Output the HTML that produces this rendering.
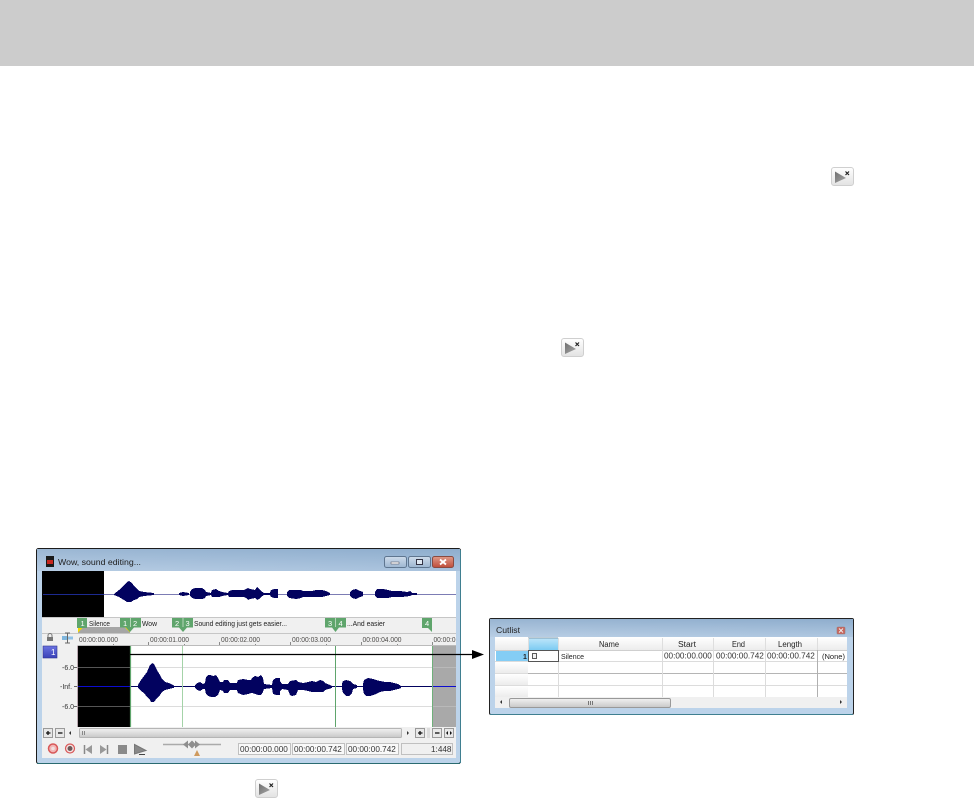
<!DOCTYPE html>
<html><head><meta charset="utf-8"><style>
html,body{margin:0;padding:0;background:#fff;width:974px;height:799px;overflow:hidden}
svg{display:block;position:absolute;left:0;top:0}
text{font-family:"Liberation Sans",sans-serif;font-size:7.5px;fill:#222}
.r{fill:#4c4a48;font-size:7.5px}
.v{fill:#333;font-size:8.2px}
.m{fill:#fff;font-size:7.5px}
</style></head><body>
<svg width="974" height="799" viewBox="0 0 974 799">
<defs>
<linearGradient id="title" x1="0" y1="0" x2="0" y2="1"><stop offset="0" stop-color="#8eaccb"/><stop offset="1" stop-color="#c3d6ea"/></linearGradient>
<linearGradient id="titleh" x1="0" y1="0" x2="1" y2="0"><stop offset="0" stop-color="#a9c2dc"/><stop offset="1" stop-color="#8fafd0"/></linearGradient>
<linearGradient id="btn" x1="0" y1="0" x2="0" y2="1"><stop offset="0" stop-color="#fff"/><stop offset="1" stop-color="#e2e2e2"/></linearGradient>
<linearGradient id="tri" x1="0" y1="0" x2="1" y2="1"><stop offset="0" stop-color="#6e6e6e"/><stop offset="1" stop-color="#a8a8a8"/></linearGradient>
<linearGradient id="wb" x1="0" y1="0" x2="0" y2="1"><stop offset="0" stop-color="#cfdceb"/><stop offset="1" stop-color="#9db6d1"/></linearGradient>
<linearGradient id="wr" x1="0" y1="0" x2="0" y2="1"><stop offset="0" stop-color="#e09a88"/><stop offset="1" stop-color="#bf4d3a"/></linearGradient>
<linearGradient id="sb" x1="0" y1="0" x2="0" y2="1"><stop offset="0" stop-color="#f2f2f2"/><stop offset="1" stop-color="#c8c8c8"/></linearGradient>
<linearGradient id="sel" x1="0" y1="0" x2="0" y2="1"><stop offset="0" stop-color="#bfe6fa"/><stop offset="1" stop-color="#7ccbf2"/></linearGradient>
<linearGradient id="hd" x1="0" y1="0" x2="0" y2="1"><stop offset="0" stop-color="#fff"/><stop offset="1" stop-color="#ececec"/></linearGradient>
<linearGradient id="badge" x1="0" y1="0" x2="0" y2="1"><stop offset="0" stop-color="#6a72e0"/><stop offset="1" stop-color="#3a42b8"/></linearGradient>
<g id="pb">
<rect x=".5" y=".5" width="22" height="18" rx="2.5" fill="url(#btn)" stroke="#cfcfcf"/>
<path d="M4 4.500 L15 11 L4 16 Z" fill="url(#tri)"/>
<path d="M14.500 4.500 L18 8 M18 4.500 L14.500 8" stroke="#222" stroke-width="1.200"/>
</g>
</defs>
<rect x="0" y="0" width="974" height="66" fill="#cccccc"/>
<use href="#pb" x="831" y="167"/>
<use href="#pb" x="561" y="338"/>
<use href="#pb" x="255" y="779"/>

<!-- Main window -->
<rect x="36.500" y="548.500" width="424" height="215" rx="2" fill="#bcd3ea" stroke="#1c1c1c"/>
<path d="M37 763.500H460" stroke="#2a6b70"/>
<path d="M460.500 550V763" stroke="#3f7f90"/>
<rect x="37" y="549" width="423" height="22" fill="url(#title)"/>
<rect x="37" y="549" width="423" height="22" fill="url(#titleh)" opacity=".5"/>
<rect x="46" y="556" width="8" height="11" fill="#1a1a1a"/><rect x="47" y="560" width="6" height="4" fill="#c8261e"/>
<text x="58" y="565" textLength="83" lengthAdjust="spacingAndGlyphs" style="font-size:8.500px">Wow, sound editing...</text>
<rect x="384.500" y="556.500" width="22" height="11" rx="2" fill="url(#wb)" stroke="#5f7690"/>
<rect x="391" y="562" width="8" height="2" fill="#fff" stroke="#445" stroke-width=".5"/>
<rect x="408.500" y="556.500" width="22" height="11" rx="2" fill="url(#wb)" stroke="#5f7690"/>
<rect x="416.500" y="559.500" width="6" height="5" fill="#dfe8f2" stroke="#334"/>
<rect x="432.500" y="556.500" width="21" height="11" rx="2" fill="url(#wr)" stroke="#8a4a40"/>
<path d="M440 559.500L446 564.500M446 559.500L440 564.500" stroke="#fff" stroke-width="1.800"/>

<rect x="42" y="571" width="414" height="187" fill="#f0f0f0"/>
<!-- overview -->
<rect x="42" y="571" width="414" height="46" fill="#fff"/>
<rect x="42" y="571" width="62" height="46" fill="#000"/>
<path d="M43 594.500H104" stroke="#1c2a90"/>
<path d="M104 594.500H456" stroke="#7c7cb4"/>
<g fill="#02025f" shape-rendering="crispEdges">
<path d="M114 594L119 590L124 585L127 582L129 581L132 583L134 586L137 589L139 591L144 592L154 593V595L144 596L139 597L137 599L134 600L131 602L129 602L127 602L124 600L119 597L114 595Z"/>
<path d="M179 593L183 592L189 593V595L183 596L179 595Z"/>
<path d="M190 592L192 589L195 588L202 588L205 590L206 592L211 593L212 590L216 589L219 591L222 592L228 593L229 591L232 590L244 590L246 589L248 588L250 589L255 590L257 587L259 589L261 591L264 593L270 593L271 590L274 589L278 589V598L274 598L271 597L270 595L264 595L261 597L259 599L257 600L255 598L250 599L248 600L246 598L244 597L232 597L229 597L228 595L222 596L219 597L216 597L212 597L211 595L206 596L205 598L202 599L195 599L192 598L190 596Z"/>
<path d="M287 592L289 590L296 590L301 590L303 591L312 591L316 590L322 590L326 591L330 593V595L326 596L322 597L316 597L312 597L303 597L301 598L296 599L289 598L287 596Z"/>
<path d="M350 592L352 590L356 589L360 591L363 592V596L360 597L356 599L352 598L350 596Z"/>
<path d="M375 592L377 589L383 589L388 590L392 591L400 591L407 592L410 591L412 593L417 593V595L412 595L410 596L402 597L392 597L388 598L383 598L377 598L375 596Z"/>
</g>
<!-- marker bar -->
<rect x="42" y="617" width="414" height="16" fill="#f0f0f0"/>
<path d="M42 617.500H456M42 633.500H456" stroke="#c6c6c6"/>
<rect x="78" y="627" width="52" height="6" fill="#a6a6a6"/>
<path d="M78 627.500H83L78 632.500Z M130 627.500H125L130 632.500Z" fill="#f0d800"/>
<g fill="#5fa56c">
<rect x="77" y="618" width="10" height="10"/>
<path d="M120 618H141V627.500H134L130 632L126 627.500H120Z"/>
<path d="M172 618H193V627.500H187L183 632L179 627.500H172Z"/>
<path d="M325 618H346V627.500H339L335.500 632L332 627.500H325Z"/>
<path d="M422 618H432V632L428 628H422Z"/>
</g>
<path d="M130.500 618V627M183 618V627M335.500 618V627" stroke="#d9ead9" stroke-width=".7"/>
<text class="m" x="80.500" y="626">1</text>
<text class="m" x="123" y="626">1</text><text class="m" x="133" y="626">2</text>
<text class="m" x="175" y="626">2</text><text class="m" x="185.500" y="626">3</text>
<text class="m" x="328" y="626">3</text><text class="m" x="338.500" y="626">4</text>
<text class="m" x="425" y="626">4</text>
<text x="89" y="626" textLength="21" lengthAdjust="spacingAndGlyphs">Silence</text>
<text x="142" y="626" textLength="15" lengthAdjust="spacingAndGlyphs">Wow</text>
<text x="194" y="626" textLength="93" lengthAdjust="spacingAndGlyphs">Sound editing just gets easier...</text>
<text x="347" y="626" textLength="38" lengthAdjust="spacingAndGlyphs">...And easier</text>
<!-- ruler -->
<rect x="77" y="634" width="379" height="12" fill="#f0f0f0"/>
<path d="M77.500 645.500H456" stroke="#bbb"/>
<g stroke="#8a8a8a" fill="none">
<path d="M148.500 642V645M219.500 642V645M290.500 642V645M361.500 642V645M432.500 642V645"/>
<path d="M113.500 644V645M184.500 644V645M255.500 644V645M326.500 644V645M397.500 644V645"/>
</g>
<text class="r" x="79" y="642" textLength="39" lengthAdjust="spacingAndGlyphs">00:00:00.000</text>
<text class="r" x="150" y="642" textLength="39" lengthAdjust="spacingAndGlyphs">00:00:01.000</text>
<text class="r" x="221" y="642" textLength="39" lengthAdjust="spacingAndGlyphs">00:00:02.000</text>
<text class="r" x="292" y="642" textLength="39" lengthAdjust="spacingAndGlyphs">00:00:03.000</text>
<text class="r" x="362.500" y="642" textLength="39" lengthAdjust="spacingAndGlyphs">00:00:04.000</text>
<text class="r" x="433.500" y="642" textLength="22" lengthAdjust="spacingAndGlyphs">00:00:0</text>
<!-- lock & icon -->
<path d="M48 637V635.500a2 2 0 0 1 4 0V637" fill="none" stroke="#777" stroke-width="1"/>
<rect x="47" y="637" width="6" height="4" fill="#777"/>
<path d="M67.500 633V643M65 633H70M65 643H70" stroke="#666" fill="none"/>
<path d="M62 636H67V640H62Z" fill="#7fb6dd"/>
<path d="M68 636.500H73V639.500H68Z" fill="#8fc2e6"/>
<!-- track badge -->
<rect x="43" y="646" width="14" height="12" fill="url(#badge)" stroke="#2d3590" stroke-width=".6"/>
<text x="51" y="655" style="fill:#fff;font-size:8px">1</text>
<!-- main wave -->
<rect x="77" y="646" width="379" height="81" fill="#fff"/>
<rect x="77.500" y="646" width="53" height="81" fill="#000"/>
<rect x="432" y="646" width="24" height="81" fill="#a9a9a9"/>
<path d="M130 667.500H432M130 706.500H432" stroke="#dcdcdc"/>
<path d="M77 667.500H130M77 706.500H130" stroke="#555"/>
<path d="M432 667.500H456M432 706.500H456" stroke="#b9b9b9"/>
<path d="M78 686.500H130" stroke="#0c0cd0"/>
<path d="M432 686.500H456" stroke="#0c0cd0"/>
<path d="M130 686.500H432" stroke="#02025f"/>
<path d="M130.500 646V727" stroke="#5fa56c" stroke-width="1.200"/>
<path d="M182.500 646V727" stroke="#a4d3a8"/>
<path d="M335.500 646V727" stroke="#5fa56c"/>
<path d="M432.500 646V727" stroke="#6fb07a"/>
<path d="M77.500 646V727" stroke="#b9a8b0"/>
<g fill="#02025f" shape-rendering="crispEdges">
<path d="M138 685L141 680L144 676L147 672L150 665L152 663L154 664L157 670L160 675L162 679L165 682L169 683L173 685L174 686V688L173 688L169 689L165 690L162 692L160 695L157 698L154 702L151 702L150 700L147 697L144 693L141 691L138 688Z"/>
<path d="M195 685L197 683L200 682L203 684L205 683L206 677L208 675L210 675L213 676L216 675L218 678L220 682L223 682L224 680L228 680L230 683L237 683L238 680L243 679L248 680L251 680L252 678L255 676L258 677L261 675L263 678L264 684L272 685L273 680L276 678L280 678V695L276 695L273 694L272 688L264 689L263 692L261 695L258 695L255 694L252 693L251 693L248 694L243 695L238 693L237 690L230 690L228 693L224 693L223 691L220 690L218 695L215 697L211 697L208 696L206 694L205 689L203 689L200 691L197 690L195 688Z"/>
<path d="M280 681L282 684L288 684L290 681L296 680L298 682L303 683L308 682L312 681L316 682L320 680L323 681L325 683L330 685L332 686V688L325 690L323 692L316 692L312 692L308 691L303 690L298 690L296 695L292 696L290 695L288 690L282 689L280 691Z"/>
<path d="M342 684L343 681L346 680L350 681L353 684L357 685V688L353 689L352 693L349 696L346 696L343 693L342 689Z"/>
<path d="M363 684L364 680L368 678L373 679L376 680L380 681L385 682L390 682L394 683L398 684L401 686V688L398 689L394 690L390 691L385 691L380 692L376 694L370 696L366 696L364 694L363 689Z"/>
</g>
<!-- scroll row -->
<rect x="42" y="727" width="414" height="12" fill="#f0f0f0"/>
<rect x="43.500" y="728.500" width="9" height="9" fill="#e8e8e8" stroke="#9a9a9a"/>
<path d="M46 733H50.500M48 731V735" stroke="#111" stroke-width="1.300"/>
<rect x="55.500" y="728.500" width="9" height="9" fill="#e8e8e8" stroke="#9a9a9a"/>
<path d="M58 733H62.500" stroke="#111" stroke-width="1.300"/>
<path d="M71 731V735L69 733Z" fill="#333"/>
<rect x="79.500" y="728.500" width="322" height="9" rx="1" fill="url(#sb)" stroke="#b5b5b5"/>
<path d="M82.500 731V735M84.500 731V735" stroke="#888"/>
<path d="M407 731V735L409 733Z" fill="#333"/>
<rect x="415.500" y="728.500" width="9" height="9" fill="#e8e8e8" stroke="#9a9a9a"/>
<path d="M418 733H422.500M420 731V735" stroke="#111" stroke-width="1.300"/>
<rect x="427" y="728" width="3" height="10" fill="#ddd"/>
<rect x="432.500" y="728.500" width="9" height="9" fill="#e8e8e8" stroke="#9a9a9a"/>
<path d="M435 733H439.500" stroke="#111" stroke-width="1.300"/>
<rect x="444.500" y="728.500" width="9" height="9" fill="#e8e8e8" stroke="#9a9a9a"/>
<path d="M448 731V735L446 733ZM450 731V735L452 733Z" fill="#111"/>
<!-- transport -->
<circle cx="53" cy="748.500" r="4.500" fill="#f2b4b4" stroke="#d85858" stroke-width="1.500"/><circle cx="53" cy="748.500" r="1.800" fill="#f0e0e0"/>
<circle cx="70" cy="748.500" r="4.500" fill="#f5e0e0" stroke="#d85858" stroke-width="1.200"/><circle cx="70" cy="748.500" r="2.500" fill="#6b5a5a"/>
<path d="M84.500 745V754" stroke="#888" stroke-width="1.500"/><path d="M92 745V754L85.500 749.500Z" fill="#999"/>
<path d="M100 745V754L106.500 749.500Z" fill="#999"/><path d="M107.500 745V754" stroke="#888" stroke-width="1.500"/>
<rect x="118" y="745" width="9" height="9" fill="#8a8a8a"/>
<path d="M134.500 744.500L146 750.500L134.500 754Z" fill="#888" stroke="#777"/><path d="M139 754.500H145" stroke="#444"/>
<path d="M163 744.500H221" stroke="#aaa" stroke-width="1.500"/>
<path d="M183 744.500L188 740.500V748.500ZM188 744.500L192 740.500L196 744.500L192 748.500ZM195 740.500L200 744.500L195 748.500Z" fill="#8e8e8e"/>
<path d="M197 750L200 756H194Z" fill="#cf9a5e"/>
<g fill="#fff" stroke="#c0c0c0">
<rect x="238.500" y="743.500" width="52" height="11" fill="#f9f9f9"/>
<rect x="292.500" y="743.500" width="52" height="11" fill="#f9f9f9"/>
<rect x="346.500" y="743.500" width="52" height="11" fill="#f9f9f9"/>
<rect x="401.500" y="743.500" width="51" height="11" fill="#f0f0f0"/>
</g>
<text class="v" x="240" y="752">00:00:00.000</text>
<text class="v" x="294" y="752">00:00:00.742</text>
<text class="v" x="348" y="752">00:00:00.742</text>
<text class="v" x="431" y="752">1:448</text>
<!-- y labels -->
<path d="M74 667.500H77M74 686.500H77M74 706.500H77" stroke="#666"/>
<text x="62" y="670" style="font-size:7px;fill:#333">-6.0</text>
<text x="60" y="689" style="font-size:7px;fill:#333">-Inf.</text>
<text x="62" y="709" style="font-size:7px;fill:#333">-6.0</text>
<!-- arrow -->
<path d="M130 654.500H473" stroke="#000" stroke-width="1.300"/>
<path d="M472 650L484 654.500L472 659Z" fill="#000"/>

<!-- Cutlist -->
<rect x="489.500" y="618.500" width="364" height="96" rx="1.500" fill="#bcd3ea" stroke="#222"/>
<path d="M490 714.500H853" stroke="#3f7f90"/>
<rect x="490" y="619" width="363" height="18" fill="url(#title)"/>
<rect x="490" y="619" width="363" height="18" fill="url(#titleh)" opacity=".4"/>
<text x="496" y="633" textLength="24" lengthAdjust="spacingAndGlyphs" style="font-size:8.500px">Cutlist</text>
<rect x="837" y="627" width="8" height="7" rx="1" fill="#c9655c" stroke="#9a7a7a" stroke-width=".6"/>
<path d="M839 628.500L843 632.500M843 628.500L839 632.500" stroke="#eee"/>
<rect x="495" y="637" width="352" height="71" fill="#fff"/>
<rect x="495" y="637" width="33" height="13" fill="url(#hd)"/>
<rect x="528" y="637" width="319" height="13" fill="url(#hd)"/>
<rect x="528" y="638" width="30" height="12" fill="url(#sel)"/>
<path d="M528 638H558" stroke="#7d9bb0"/>
<path d="M495 650.500H847" stroke="#cfcfcf"/>
<path d="M558.500 638V650M662.500 638V650M713.500 638V650M765.500 638V650M817.500 638V650M528.500 638V650" stroke="#dedede"/>
<rect x="496" y="651" width="32" height="11" fill="#84cdf5"/>
<rect x="495" y="662" width="33" height="11" fill="url(#hd)"/>
<rect x="495" y="674" width="33" height="11" fill="url(#hd)"/>
<rect x="495" y="686" width="33" height="11" fill="url(#hd)"/>
<path d="M528 661.500H847" stroke="#dcdcdc"/>
<path d="M528 673.500H847" stroke="#b5b5b5"/>
<path d="M495 685.500H847" stroke="#dcdcdc"/>
<path d="M495 661.500H528M495 673.500H528" stroke="#dcdcdc"/>
<path d="M558.500 650V697M662.500 650V697M713.500 650V697M765.500 650V697" stroke="#dcdcdc"/>
<path d="M817.500 650V697" stroke="#b0b0b0"/>
<rect x="528.500" y="650.500" width="30" height="11" fill="#fff" stroke="#555"/>
<rect x="532.500" y="653.500" width="4" height="5" fill="#f2f2f2" stroke="#333" stroke-width=".8"/>
<text x="599" y="647" textLength="20" lengthAdjust="spacingAndGlyphs" style="font-size:8px">Name</text>
<text x="678" y="647" textLength="18" lengthAdjust="spacingAndGlyphs" style="font-size:8px">Start</text>
<text x="732" y="647" textLength="13" lengthAdjust="spacingAndGlyphs" style="font-size:8px">End</text>
<text x="778" y="647" textLength="24" lengthAdjust="spacingAndGlyphs" style="font-size:8px">Length</text>
<text x="523" y="659" style="font-weight:bold;font-size:7px">1</text>
<text x="561" y="659" textLength="23" lengthAdjust="spacingAndGlyphs">Silence</text>
<text class="v" x="664" y="658.500">00:00:00.000</text>
<text class="v" x="716" y="658.500">00:00:00.742</text>
<text class="v" x="767" y="658.500">00:00:00.742</text>
<text x="822" y="659" textLength="23" lengthAdjust="spacingAndGlyphs">(None)</text>
<rect x="495" y="697" width="352" height="11" fill="#f0f0f0"/>
<path d="M502 700V704L500 702Z" fill="#333"/>
<rect x="509.500" y="698.500" width="161" height="9" rx="1.500" fill="url(#sb)" stroke="#999"/>
<path d="M588.500 701V705M590.500 701V705M592.500 701V705" stroke="#777"/>
<path d="M840 700V704L842 702Z" fill="#333"/>
</svg>
</body></html>
